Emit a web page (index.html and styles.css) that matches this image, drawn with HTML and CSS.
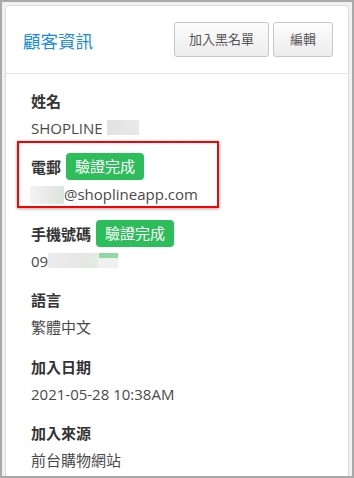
FILE: index.html
```html
<!DOCTYPE html>
<html lang="zh-Hant">
<head>
    <meta charset="UTF-8">
    <title>顧客資訊</title>
    <link rel="stylesheet" href="styles.css">
</head>
<body>

<div class="frame">
    <section class="panel">
        <div class="panel-head">
            <h2 class="panel-title">顧客資訊</h2>
            <div class="actions">
                <a class="btn">加入黑名單</a>
                <a class="btn btn-edit">編輯</a>
            </div>
        </div>

        <div class="panel-body">
            <div class="field">
                <div class="label">姓名</div>
                <div class="value">SHOPLINE <span class="blur blur-name"></span></div>
            </div>
            <div class="field highlight">
                <div class="label">電郵 <span class="badge">驗證完成</span></div>
                <div class="value"><span class="blur blur-mail"></span>@shoplineapp.com</div>
            </div>
            <div class="field">
                <div class="label">手機號碼 <span class="badge">驗證完成</span></div>
                <div class="value">09<span class="blur blur-phone"></span></div>
            </div>
            <div class="field">
                <div class="label">語言</div>
                <div class="value">繁體中文</div>
            </div>
            <div class="field">
                <div class="label">加入日期</div>
                <div class="value">2021-05-28 10:38AM</div>
            </div>
            <div class="field">
                <div class="label">加入來源</div>
                <div class="value">前台購物網站</div>
            </div>
        </div>
    </section>
</div>

</body>
</html>
```

FILE: styles.css
```css
body {
    margin: 0;
    padding: 0;
    font-family: "Open Sans", "Noto Sans CJK TC", sans-serif;
}
.frame {
    background: #f1f1f1;
    border: 2px solid #a9a9a9;
    box-sizing: border-box;
    height: 478px;
    overflow: hidden;
    padding: 3px 3px 0;
}
.panel {
    background: #fff;
    border: 1px solid #dcdcdc;
    border-bottom: none;
    border-radius: 5px 5px 0 0;
    box-sizing: border-box;
    height: 100%;
}
.panel-head {
    align-items: center;
    border-bottom: 1px solid #e2e2e2;
    display: flex;
    height: 67px;
    justify-content: space-between;
    padding: 0 15px 0 17px;
}
.panel-title {
    color: #1a8ce2;
    font-size: 17.5px;
    font-weight: normal;
    margin: 2px 0 0;
}
.actions {
    display: flex;
    gap: 4px;
}
.btn {
    background: linear-gradient(#fdfdfd, #ececec);
    border: 1px solid #c8c8c8;
    border-radius: 3px;
    box-sizing: border-box;
    color: #555;
    font-size: 13px;
    height: 35px;
    line-height: 33px;
    padding: 0 14px;
    text-align: center;
}
.btn-edit {
    min-width: 60px;
}
.panel-body {
    display: flex;
    flex-direction: column;
    gap: 15.5px;
    padding: 12.5px 20px 0 25px;
}
.field {
    position: relative;
}
.label {
    align-items: center;
    color: #333;
    display: flex;
    font-size: 15px;
    font-weight: bold;
    height: 27px;
}
.value {
    color: #4a4a4a;
    font-size: 15px;
    line-height: 20px;
    margin-top: 4px;
    white-space: nowrap;
}
.badge {
    background: #2dbd5a;
    border-radius: 4px;
    color: #fff;
    font-weight: normal;
    height: 27px;
    line-height: 27px;
    margin-left: 5px;
    padding: 0 9px;
}
.highlight::after {
    border: 2px solid #f00;
    box-shadow: 0 1px 3px rgba(0, 0, 0, 0.35);
    box-sizing: border-box;
    content: "";
    height: 67px;
    left: -14px;
    position: absolute;
    top: -12.5px;
    width: 202px;
}
.blur {
    display: inline-block;
    vertical-align: middle;
}
.blur-name {
    background: linear-gradient(90deg, #e2e2e2, #e9e9e9);
    height: 15px;
    margin-top: -3px;
    width: 32px;
}
.blur-mail {
    background: linear-gradient(90deg, #f3f3f3, #e6e6e6 70%, #d8e8dc);
    height: 18px;
    margin-left: -1px;
    margin-top: -2px;
    width: 34px;
}
.blur-phone {
    background: linear-gradient(#8fd9a8, #8fd9a8) right top / 19px 5px no-repeat,
                linear-gradient(90deg, #ececec, #e6e6e6 50%, #dfeee3 72%, #f0f0f0 72%);
    height: 15px;
    margin-top: -3px;
    width: 70px;
}
```
